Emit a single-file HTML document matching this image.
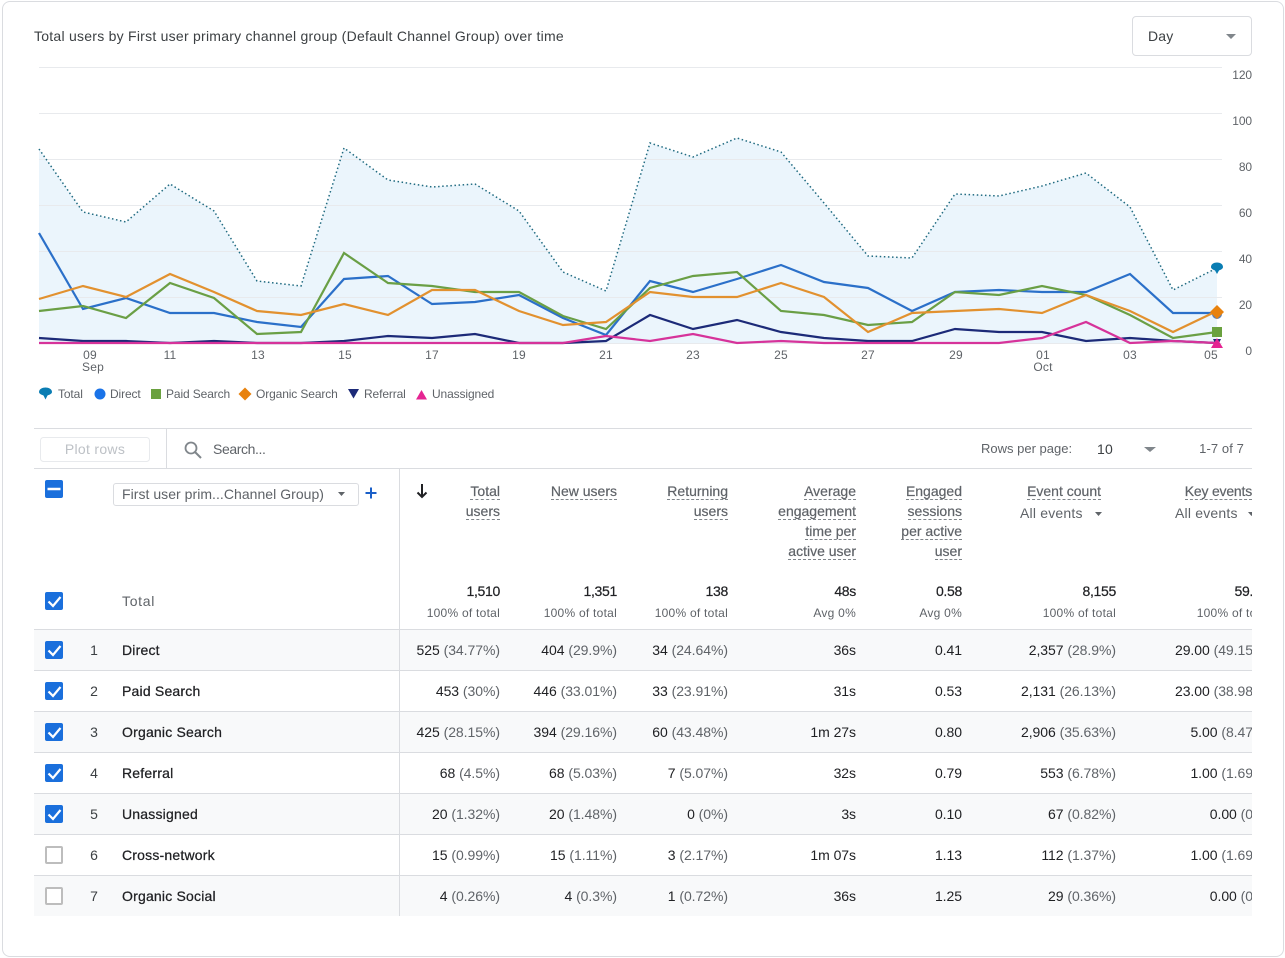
<!DOCTYPE html>
<html><head><meta charset="utf-8"><style>
html,body{margin:0;padding:0;background:#fff}
body{width:1285px;height:958px;position:relative;overflow:hidden;font-family:"Liberation Sans",sans-serif;font-size:14px;color:#5f6368;letter-spacing:.2px}
.t{position:absolute;white-space:nowrap;line-height:20px}
#card{position:absolute;left:2px;top:1px;width:1282px;height:956px;border:1px solid #dadce0;border-radius:8px;box-sizing:border-box}
svg{position:absolute;left:0;top:0}
.ax{font-size:12px;line-height:14px;letter-spacing:.2px;transform:translateX(-50%)}
.yl{font-size:12px;line-height:14px;letter-spacing:-.1px;right:33px}
.lg{font-size:12px;line-height:14px;top:387px;letter-spacing:-.12px}
#tbl{position:absolute;left:34px;top:469px;width:1218px;height:447px;overflow:hidden}
.r{position:absolute;left:0;width:1218px;height:41px;border-top:1px solid #dadce0;box-sizing:border-box}
.s{background:#f8f9fa}
.r .t{top:10px;color:#202124;letter-spacing:-.05px}
.r .t i{font-style:normal;color:#5f6368}
.r .t.n{left:122px;-webkit-text-stroke:.25px #202124;letter-spacing:.2px}
.r .t.id{left:50px;width:20px;text-align:center;color:#3c4043}
.c1{right:752px}.c2{right:635px}.c3{right:524px}.c4{right:396px}.c5{right:290px}.c6{right:136px}.c7{right:-18px}
.h{position:absolute;white-space:nowrap;line-height:16px;border-bottom:1px dashed #80868b;color:#5f6368;-webkit-text-stroke:.2px #5f6368;letter-spacing:0}
.tv{position:absolute;white-space:nowrap;line-height:20px;top:112px;color:#202124;-webkit-text-stroke:.2px #202124;letter-spacing:-.3px}
.tp{position:absolute;white-space:nowrap;line-height:14px;top:137px;font-size:12px;color:#5f6368;letter-spacing:.25px}
.cb{position:absolute;left:11px;width:18px;height:18px;border-radius:2px;background:#1a6fdc;box-sizing:border-box}
.cb svg{position:absolute;left:0;top:0}
.un{background:#fff;border:2px solid #bdbdbd}
.vl{position:absolute;left:365px;top:0;width:1px;height:447px;background:#dadce0}
</style></head><body>
<div id="card"></div>
<div class="t" style="left:34px;top:26px;color:#3c4043;letter-spacing:.25px">Total users by First user primary channel group (Default Channel Group) over time</div>
<div style="position:absolute;left:1132px;top:16px;width:120px;height:40px;border:1px solid #dadce0;border-radius:4px;box-sizing:border-box"></div>
<div class="t" style="left:1148px;top:26px;color:#3c4043">Day</div>

<svg width="1285" height="958" viewBox="0 0 1285 958">
<polygon fill="#ebf5fc" points="39,149 83,212 126,222 170,184 214,211 257,281 301,286 344,148 388,180 432,187 475,184 519,211 563,272 606,291 650,143 693,157 737,138 781,152 824,203 868,256 912,258 955,194 999,196 1042,186 1086,173 1130,207 1173,290 1217,268 1217,343 39,343"/>
<g stroke="#e8eaed" stroke-width="1">
<path d="M39 67.500H1222M39 113.500H1222M39 159.500H1222M39 205.500H1222M39 251.500H1222M39 297.500H1222M39 343.500H1222"/>
</g>
<path d="M1226 34h10l-5 5z" fill="#80868b"/>
<g fill="none" stroke-linejoin="miter">
<polyline stroke="#1f6a80" stroke-width="1.500" stroke-dasharray="1.500 2.600" points="39,149 83,212 126,222 170,184 214,211 257,281 301,286 344,148 388,180 432,187 475,184 519,211 563,272 606,291 650,143 693,157 737,138 781,152 824,203 868,256 912,258 955,194 999,196 1042,186 1086,173 1130,207 1173,290 1217,268"/>
<polyline stroke="#2b70c9" stroke-width="2.200" points="39,233 83,309 126,298 170,313 214,313 257,322 301,327 344,279 388,276 432,304 475,302 519,295 563,318 606,335 650,281 693,292 737,279 781,265 824,282 868,288 912,311 955,292 999,290 1042,292 1086,292 1130,274 1173,313 1217,313"/>
<polyline stroke="#6a9f45" stroke-width="2.200" points="39,311 83,306 126,318 170,283 214,298 257,334 301,332 344,253 388,283 432,286 475,292 519,292 563,316 606,329 650,288 693,276 737,272 781,311 824,315 868,325 912,322 955,292 999,295 1042,286 1086,295 1130,315 1173,338 1217,332"/>
<polyline stroke="#e2912f" stroke-width="2.200" points="39,299 83,286 126,297 170,274 214,292 257,311 301,315 344,304 388,315 432,290 475,290 519,311 563,325 606,322 650,292 693,297 737,297 781,283 824,297 868,332 912,313 955,311 999,309 1042,313 1086,295 1130,311 1173,332 1217,311"/>
<polyline stroke="#1c2a78" stroke-width="2.200" points="39,338 83,341 126,341 170,343 214,341 257,343 301,343 344,341 388,336 432,338 475,334 519,343 563,343 606,341 650,315 693,329 737,320 781,332 824,338 868,341 912,341 955,329 999,332 1042,332 1086,341 1130,338 1173,341 1217,343"/>
<polyline stroke="#d6339a" stroke-width="2.200" points="39,343 83,343 126,343 170,343 214,343 257,343 301,343 344,343 388,343 432,343 475,343 519,343 563,343 606,336 650,341 693,334 737,343 781,341 824,343 868,343 912,343 955,343 999,343 1042,338 1086,322 1130,343 1173,341 1217,343"/>
</g>
<!-- end markers -->
<path transform="translate(1217,268)" d="M-6 -1C-6 -4 -3 -5.500 0 -5.500C3 -5.500 6 -4 6 -1C6 1 3 2 2 2.500L0 6L-2 2.500C-3 2 -6 1 -6 -1z" fill="#0a7db3"/>
<circle cx="1217" cy="314" r="5" fill="#5b7fb5"/>
<path d="M1217 305l7 7-7 7-7-7z" fill="#e8820e"/>
<rect x="1212" y="327" width="10" height="10" fill="#6aa13f"/>
<path d="M1213 339h8l-1.500 3h-5z" fill="#1c2a78"/>
<path d="M1211 348l6-10 6 10z" fill="#e52592"/>
<!-- legend markers -->
<path transform="translate(45.500,393)" d="M-6.500 -1C-6.500 -4 -3 -5.500 0 -5.500C3 -5.500 6.500 -4 6.500 -1C6.500 1 3 2 2 2.500L0 6.500L-2 2.500C-3 2 -6.500 1 -6.500 -1z" fill="#0a7db3"/>
<circle cx="100" cy="394" r="5.500" fill="#1a73e8"/>
<rect x="151" y="389" width="10" height="10" fill="#6aa13f"/>
<path d="M245 387.500l6.500 6.500-6.500 6.500-6.500-6.500z" fill="#e8820e"/>
<path d="M348 389h11l-5.500 9.500z" fill="#1c2a78"/>
<path d="M416 399.500l5.500-9.500 5.500 9.500z" fill="#e52592"/>
<!-- toolbar -->
<path d="M34 428.500H1252M34 468.500H1252M166.500 429V468" stroke="#dadce0" stroke-width="1"/>
<rect x="40.500" y="437.500" width="109" height="24" rx="3" fill="#fff" stroke="#e8eaed"/>
<circle cx="191" cy="448" r="5.500" fill="none" stroke="#80868b" stroke-width="1.800"/>
<path d="M195 452l6 6" stroke="#80868b" stroke-width="2"/>
<path d="M1144 447h12l-6 5z" fill="#80868b"/>
</svg>

<div class="yl t" style="top:68px">120</div>
<div class="yl t" style="top:114px">100</div>
<div class="yl t" style="top:160px">80</div>
<div class="yl t" style="top:206px">60</div>
<div class="yl t" style="top:252px">40</div>
<div class="yl t" style="top:298px">20</div>
<div class="yl t" style="top:344px">0</div>

<div class="ax t" style="left:90px;top:348px">09</div><div class="ax t" style="left:93px;top:360px">Sep</div>
<div class="ax t" style="left:170px;top:348px">11</div>
<div class="ax t" style="left:258px;top:348px">13</div>
<div class="ax t" style="left:345px;top:348px">15</div>
<div class="ax t" style="left:432px;top:348px">17</div>
<div class="ax t" style="left:519px;top:348px">19</div>
<div class="ax t" style="left:606px;top:348px">21</div>
<div class="ax t" style="left:693px;top:348px">23</div>
<div class="ax t" style="left:781px;top:348px">25</div>
<div class="ax t" style="left:868px;top:348px">27</div>
<div class="ax t" style="left:956px;top:348px">29</div>
<div class="ax t" style="left:1043px;top:348px">01</div><div class="ax t" style="left:1043px;top:360px">Oct</div>
<div class="ax t" style="left:1130px;top:348px">03</div>
<div class="ax t" style="left:1211px;top:348px">05</div>

<div class="lg t" style="left:58px">Total</div>
<div class="lg t" style="left:110px">Direct</div>
<div class="lg t" style="left:166px">Paid Search</div>
<div class="lg t" style="left:256px">Organic Search</div>
<div class="lg t" style="left:364px">Referral</div>
<div class="lg t" style="left:432px">Unassigned</div>

<div class="t" style="left:40px;width:110px;text-align:center;top:439px;color:#bdc1c6;letter-spacing:.3px">Plot rows</div>
<div class="t" style="left:213px;top:439px;letter-spacing:-.4px">Search...</div>
<div class="t" style="left:981px;top:439px;font-size:13px;letter-spacing:0">Rows per page:</div>
<div class="t" style="left:1097px;top:439px;color:#3c4043">10</div>
<div class="t" style="right:41px;top:439px;font-size:13px;letter-spacing:.1px">1-7 of 7</div>

<div id="tbl">
<div class="vl" style="z-index:2"></div>
<div class="cb" style="top:11px"><svg width="18" height="18"><path d="M2.500 9h13" stroke="#fff" stroke-width="2.500"/></svg></div>
<div style="position:absolute;left:79px;top:14px;width:246px;height:23px;border:1px solid #dadce0;border-radius:3px;box-sizing:border-box;background:#fff"></div>
<div class="t" style="left:88px;top:15px;letter-spacing:.04px">First user prim...Channel Group)</div>
<svg width="1218" height="447" style="z-index:3">
<path d="M304 23h7l-3.500 4z" fill="#5f6368"/>
<path d="M337 18.500v11M331.500 24h11" stroke="#1a5fc8" stroke-width="2"/>
<path d="M388 15v13M383.500 23.500l4.500 4.500 4.500-4.500" fill="none" stroke="#202124" stroke-width="2"/>
<path d="M1061 43h7l-3.500 4z" fill="#5f6368"/>
<path d="M1214 43h7l-3.500 4z" fill="#5f6368"/>
</svg>
<div class="h" style="right:752px;top:14px">Total</div>
<div class="h" style="right:752px;top:34px">users</div>
<div class="h" style="right:635px;top:14px">New users</div>
<div class="h" style="right:524px;top:14px">Returning</div>
<div class="h" style="right:524px;top:34px">users</div>
<div class="h" style="right:396px;top:14px">Average</div>
<div class="h" style="right:396px;top:34px">engagement</div>
<div class="h" style="right:396px;top:54px">time per</div>
<div class="h" style="right:396px;top:74px">active user</div>
<div class="h" style="right:290px;top:14px">Engaged</div>
<div class="h" style="right:290px;top:34px">sessions</div>
<div class="h" style="right:290px;top:54px">per active</div>
<div class="h" style="right:290px;top:74px">user</div>
<div class="h" style="right:151px;top:14px">Event count</div>
<div class="h" style="right:0;top:14px;letter-spacing:-.2px">Key events</div>
<div class="t" style="left:986px;top:34px">All events</div>
<div class="t" style="left:1141px;top:34px">All events</div>

<div class="cb" style="top:123px"><svg width="18" height="18"><path d="M3.500 9.500l4.500 4.500 7.500-9" fill="none" stroke="#fff" stroke-width="2.200"/></svg></div>
<div class="t" style="left:88px;top:122px;letter-spacing:.7px">Total</div>
<div class="tv c1">1,510</div><div class="tv c2">1,351</div><div class="tv c3">138</div><div class="tv c4">48s</div><div class="tv c5">0.58</div><div class="tv c6">8,155</div><div class="tv" style="right:-16px">59.00</div>
<div class="tp c1">100% of total</div><div class="tp c2">100% of total</div><div class="tp c3">100% of total</div><div class="tp c4">Avg 0%</div><div class="tp c5">Avg 0%</div><div class="tp c6">100% of total</div><div class="tp c7">100% of total</div>

<div class="r s" style="top:160px"><div class="cb" style="top:11px"><svg width="18" height="18"><path d="M3.500 9.500l4.500 4.500 7.500-9" fill="none" stroke="#fff" stroke-width="2.200"/></svg></div><div class="t id">1</div><div class="t n" style="left:88px">Direct</div>
<div class="t c1">525 <i>(34.77%)</i></div><div class="t c2">404 <i>(29.9%)</i></div><div class="t c3">34 <i>(24.64%)</i></div><div class="t c4">36s</div><div class="t c5">0.41</div><div class="t c6">2,357 <i>(28.9%)</i></div><div class="t c7">29.00 <i>(49.15%)</i></div></div>

<div class="r" style="top:201px"><div class="cb" style="top:11px"><svg width="18" height="18"><path d="M3.500 9.500l4.500 4.500 7.500-9" fill="none" stroke="#fff" stroke-width="2.200"/></svg></div><div class="t id">2</div><div class="t n" style="left:88px">Paid Search</div>
<div class="t c1">453 <i>(30%)</i></div><div class="t c2">446 <i>(33.01%)</i></div><div class="t c3">33 <i>(23.91%)</i></div><div class="t c4">31s</div><div class="t c5">0.53</div><div class="t c6">2,131 <i>(26.13%)</i></div><div class="t c7">23.00 <i>(38.98%)</i></div></div>

<div class="r s" style="top:242px"><div class="cb" style="top:11px"><svg width="18" height="18"><path d="M3.500 9.500l4.500 4.500 7.500-9" fill="none" stroke="#fff" stroke-width="2.200"/></svg></div><div class="t id">3</div><div class="t n" style="left:88px">Organic Search</div>
<div class="t c1">425 <i>(28.15%)</i></div><div class="t c2">394 <i>(29.16%)</i></div><div class="t c3">60 <i>(43.48%)</i></div><div class="t c4">1m 27s</div><div class="t c5">0.80</div><div class="t c6">2,906 <i>(35.63%)</i></div><div class="t c7">5.00 <i>(8.47%)</i></div></div>

<div class="r" style="top:283px"><div class="cb" style="top:11px"><svg width="18" height="18"><path d="M3.500 9.500l4.500 4.500 7.500-9" fill="none" stroke="#fff" stroke-width="2.200"/></svg></div><div class="t id">4</div><div class="t n" style="left:88px">Referral</div>
<div class="t c1">68 <i>(4.5%)</i></div><div class="t c2">68 <i>(5.03%)</i></div><div class="t c3">7 <i>(5.07%)</i></div><div class="t c4">32s</div><div class="t c5">0.79</div><div class="t c6">553 <i>(6.78%)</i></div><div class="t c7">1.00 <i>(1.69%)</i></div></div>

<div class="r s" style="top:324px"><div class="cb" style="top:11px"><svg width="18" height="18"><path d="M3.500 9.500l4.500 4.500 7.500-9" fill="none" stroke="#fff" stroke-width="2.200"/></svg></div><div class="t id">5</div><div class="t n" style="left:88px">Unassigned</div>
<div class="t c1">20 <i>(1.32%)</i></div><div class="t c2">20 <i>(1.48%)</i></div><div class="t c3">0 <i>(0%)</i></div><div class="t c4">3s</div><div class="t c5">0.10</div><div class="t c6">67 <i>(0.82%)</i></div><div class="t c7">0.00 <i>(0%)</i></div></div>

<div class="r" style="top:365px"><div class="cb un" style="top:11px"></div><div class="t id">6</div><div class="t n" style="left:88px">Cross-network</div>
<div class="t c1">15 <i>(0.99%)</i></div><div class="t c2">15 <i>(1.11%)</i></div><div class="t c3">3 <i>(2.17%)</i></div><div class="t c4">1m 07s</div><div class="t c5">1.13</div><div class="t c6">112 <i>(1.37%)</i></div><div class="t c7">1.00 <i>(1.69%)</i></div></div>

<div class="r s" style="top:406px"><div class="cb un" style="top:11px"></div><div class="t id">7</div><div class="t n" style="left:88px">Organic Social</div>
<div class="t c1">4 <i>(0.26%)</i></div><div class="t c2">4 <i>(0.3%)</i></div><div class="t c3">1 <i>(0.72%)</i></div><div class="t c4">36s</div><div class="t c5">1.25</div><div class="t c6">29 <i>(0.36%)</i></div><div class="t c7">0.00 <i>(0%)</i></div></div>
</div>
</body></html>
